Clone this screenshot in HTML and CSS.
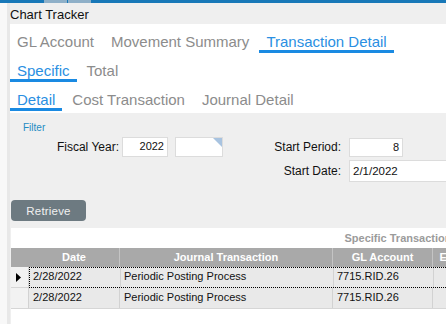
FILE: index.html
```html
<!DOCTYPE html>
<html lang="en">

<head>
    <meta charset="UTF-8">
    <meta name="viewport" content="width=device-width, initial-scale=1.0">
    <title>Chart Tracker</title>
    <link rel="stylesheet" href="styles.css">
</head>

<body>
    <div class="top-strip">
        <span class="strip-blue"></span>
        <span class="strip-tab"></span>
        <span class="strip-tab"></span>
    </div>

    <div class="shell">
        <div class="rail"></div>

        <div class="content">
            <div class="title-bar">Chart Tracker</div>

            <div class="tab-panel">
                <div class="tab-row">
                    <div class="tab">GL Account</div>
                    <div class="tab">Movement Summary</div>
                    <div class="tab active">Transaction Detail</div>
                </div>
                <div class="tab-row">
                    <div class="tab active">Specific</div>
                    <div class="tab">Total</div>
                </div>
                <div class="tab-row">
                    <div class="tab active">Detail</div>
                    <div class="tab">Cost Transaction</div>
                    <div class="tab">Journal Detail</div>
                </div>
            </div>

            <div class="filter">
                <div class="filter-title">Filter</div>

                <div class="field-row">
                    <label class="field-label label-left">Fiscal Year:</label>
                    <div class="field year">2022</div>
                    <div class="field picker"></div>
                    <label class="field-label label-right">Start Period:</label>
                    <div class="field period">8</div>
                </div>

                <div class="field-row second">
                    <label class="field-label label-right">Start Date:</label>
                    <div class="field date">2/1/2022</div>
                </div>
            </div>

            <button class="retrieve-button">Retrieve</button>

            <div class="grid-area">
                <div class="grid">
                    <div class="grid-caption">Specific Transaction</div>

                    <div class="grid-head">
                        <div class="indicator"></div>
                        <div class="cells">
                            <div class="cell">Date</div>
                            <div class="cell">Journal Transaction</div>
                            <div class="cell">GL Account</div>
                            <div class="cell">Entered By</div>
                            <div class="cell">Amount</div>
                            <div class="cell">Reference</div>
                        </div>
                    </div>

                    <div class="grid-row">
                        <div class="indicator">
                            <svg width="5" height="9" viewBox="0 0 5 9"><polygon points="0,0 5,4.5 0,9" fill="#000"/></svg>
                        </div>
                        <div class="cells focused">
                            <div class="cell">2/28/2022</div>
                            <div class="cell">Periodic Posting Process</div>
                            <div class="cell">7715.RID.26</div>
                            <div class="cell"></div>
                            <div class="cell"></div>
                            <div class="cell"></div>
                        </div>
                    </div>

                    <div class="grid-row">
                        <div class="indicator"></div>
                        <div class="cells">
                            <div class="cell">2/28/2022</div>
                            <div class="cell">Periodic Posting Process</div>
                            <div class="cell">7715.RID.26</div>
                            <div class="cell"></div>
                            <div class="cell"></div>
                            <div class="cell"></div>
                        </div>
                    </div>
                </div>
            </div>
        </div>
    </div>
</body>

</html>
```

FILE: styles.css
```css
* {
    margin: 0;
    padding: 0;
    box-sizing: border-box;
}

body {
    width: 446px;
    height: 324px;
    overflow: hidden;
    background: #efefef;
    font-family: "Liberation Sans", Arial, sans-serif;
    color: #111;
    display: flex;
    flex-direction: column;
}

/* thin window strip along the top */
.top-strip {
    height: 3px;
    background: #1878b8;
    display: flex;
    flex-shrink: 0;
}

.strip-blue {
    width: 44px;
}

.strip-tab {
    width: 23px;
    background: #8fb0c8;
    margin-right: 1px;
}

.shell {
    flex: 1;
    display: flex;
    min-height: 0;
}

.rail {
    width: 10px;
    flex-shrink: 0;
    background: #f8f8f8;
    border-right: 3px solid #e8e8e8;
}

.content {
    flex: 1;
    min-width: 0;
    display: flex;
    flex-direction: column;
    overflow: hidden;
}

.title-bar {
    height: 21px;
    font-size: 13px;
    line-height: 21px;
    padding-top: 1px;
    color: #111;
}

/* tabs */
.tab-panel {
    background: #fff;
    padding-bottom: 2px;
}

.tab-row {
    display: flex;
    height: 29px;
}

.tab {
    padding: 9px 7px 0;
    margin-right: 3px;
    font-size: 15px;
    line-height: 17px;
    color: #8c8c8c;
    border-bottom: 3px solid transparent;
    white-space: nowrap;
}

.tab.active {
    color: #2a8fe2;
    border-bottom-color: #1a8ae2;
}

/* filter fields */
.filter {
    padding-top: 9px;
}

.filter-title {
    padding-left: 13px;
    font-size: 10px;
    line-height: 12px;
    color: #1e8bc3;
}

.field-row {
    display: flex;
    align-items: center;
    height: 20px;
    margin-top: 3px;
}

.field-row.second {
    height: 22px;
    padding-left: 213px;
}

.field-label {
    flex-shrink: 0;
    font-size: 12px;
    line-height: 14px;
    text-align: right;
    color: #111;
}

.label-left {
    width: 109px;
}

.label-right {
    width: 118px;
}

.field {
    flex-shrink: 0;
    background: #fff;
    border: 1px solid #dcdcdc;
    font-size: 11px;
    height: 20px;
    line-height: 18px;
    padding: 0 3px;
    color: #111;
}

.year {
    width: 46px;
    margin-left: 3px;
    text-align: right;
    line-height: 16px;
}

.picker {
    width: 48px;
    margin-left: 7px;
    position: relative;
}

.picker::after {
    content: "";
    position: absolute;
    top: 0;
    right: 0;
    border-top: 9px solid #a8c3e0;
    border-left: 9px solid transparent;
}

.period {
    width: 54px;
    height: 19px;
    margin-left: 8px;
    text-align: right;
    line-height: 16px;
}

.date {
    width: 110px;
    height: 22px;
    margin-left: 8px;
    line-height: 20px;
    font-size: 11.5px;
}

.retrieve-button {
    align-self: flex-start;
    margin: 18px 0 0 1px;
    width: 75px;
    height: 21px;
    border: none;
    border-radius: 4px;
    background: #6d7a81;
    color: #f0f0f0;
    font-family: "Liberation Sans", Arial, sans-serif;
    font-size: 11.5px;
    letter-spacing: 0.2px;
}

/* transaction grid */
.grid-area {
    flex: 1;
    margin: 7px 0 0 1px;
    background: #fff;
    overflow: hidden;
}

.grid {
    width: 774px;
    font-size: 11px;
}

.grid-caption {
    height: 20px;
    line-height: 20px;
    text-align: center;
    font-weight: bold;
    color: #9b9b9b;
}

.grid-head,
.grid-row {
    display: flex;
}

.indicator {
    width: 18px;
    flex-shrink: 0;
    display: flex;
    align-items: center;
    justify-content: center;
    padding-right: 2px;
}

.cells {
    flex: 1;
    display: grid;
    grid-template-columns: 91px 213px 100px 72px 140px 140px;
}

.grid-head {
    height: 19px;
    background: #a9a9a9;
}

.grid-head .cell {
    line-height: 19px;
    text-align: center;
    font-weight: bold;
    color: #fff;
    border-right: 1px solid #c4c4c4;
    white-space: nowrap;
    overflow: hidden;
}

.grid-row {
    height: 21px;
}

.grid-row .indicator {
    background: #f2f2f2;
    border-right: 1px solid #d2d2d2;
    border-bottom: 1px solid #d6d6d6;
}

.grid-row .cells {
    background: #e9e9e9;
    border-bottom: 1px solid #d6d6d6;
}

.grid-row .cell {
    line-height: 18px;
    padding-left: 4px;
    border-right: 1px solid #d2d2d2;
    white-space: nowrap;
    color: #111;
}

.cells.focused {
    border: 1px dotted #000;
    border-right: none;
}

.cells.focused .cell {
    line-height: 16px;
    padding-left: 3px;
}
```
